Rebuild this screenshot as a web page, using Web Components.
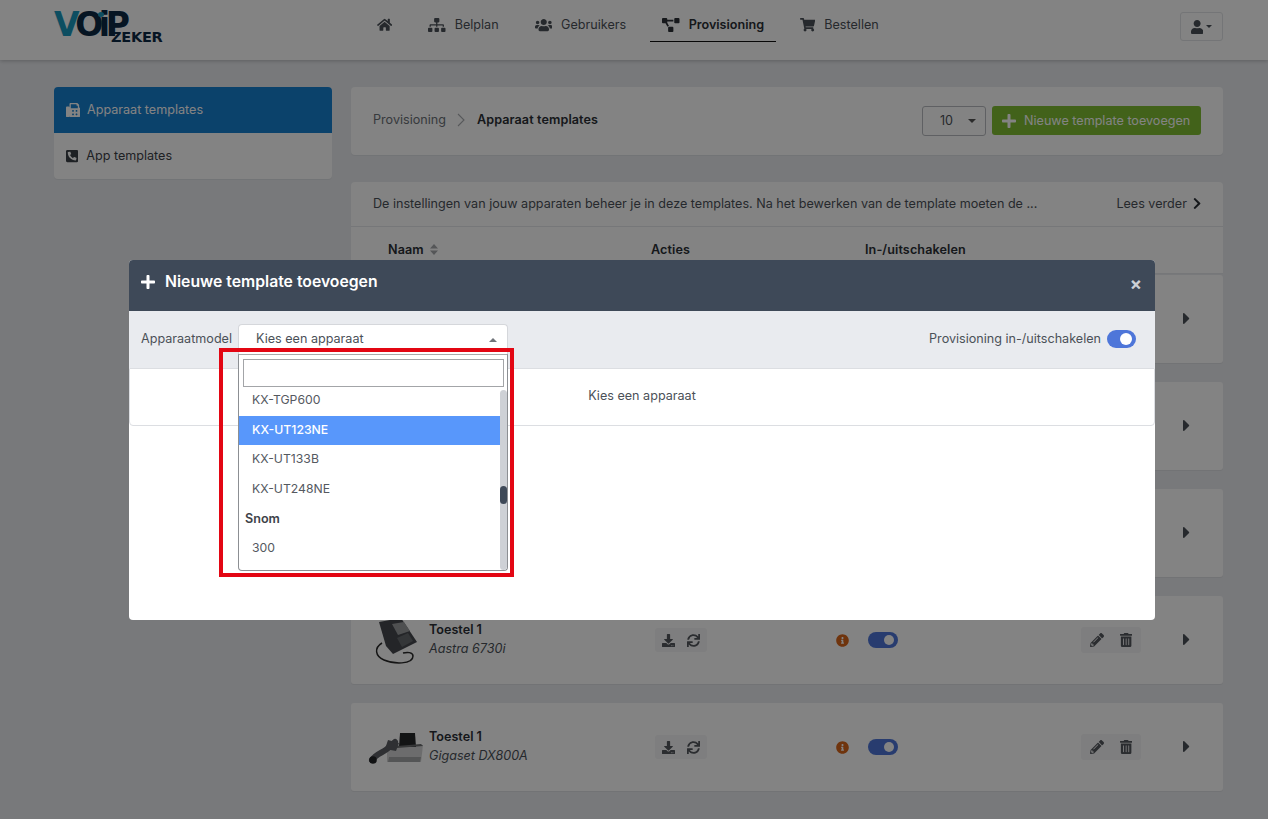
<!DOCTYPE html>
<html lang="nl"><head><meta charset="utf-8"><title>Provisioning</title>
<style>
html,body{margin:0;padding:0;height:100%;overflow:hidden}
body{background:#eaecf0;font:12.6px/1.4 Inter,"Liberation Sans",sans-serif;color:#4b5158}
</style></head><body>
<vz-app></vz-app>
<script>
const ICONS={
plus:[448,"M416 208H272V64c0-17.67-14.33-32-32-32h-32c-17.67 0-32 14.33-32 32v144H32c-17.67 0-32 14.33-32 32v32c0 17.67 14.33 32 32 32h144v144c0 17.67 14.33 32 32 32h32c17.67 0 32-14.33 32-32V304h144c17.67 0 32-14.33 32-32v-32c0-17.67-14.33-32-32-32z"],
caret:[192,"M0 384.662V127.338c0-17.818 21.543-26.741 34.142-14.142l128.662 128.662c7.81 7.81 7.81 20.474 0 28.284L34.142 398.804C21.543 411.404 0 402.48 0 384.662z"],
home:[576,"M280.37 148.26L96 300.11V464a16 16 0 0 0 16 16l112.06-.29a16 16 0 0 0 15.92-16V368a16 16 0 0 1 16-16h64a16 16 0 0 1 16 16v95.64a16 16 0 0 0 16 16.05L464 480a16 16 0 0 0 16-16V300L295.67 148.26a12.19 12.19 0 0 0-15.3 0zM571.6 251.47L488 182.56V44.05a12 12 0 0 0-12-12h-56a12 12 0 0 0-12 12v72.61L318.47 43a48 48 0 0 0-61 0L4.34 251.47a12 12 0 0 0-1.6 16.9l25.5 31A12 12 0 0 0 45.15 301l235.22-193.74a12.19 12.19 0 0 1 15.3 0L530.9 301a12 12 0 0 0 16.9-1.6l25.5-31a12 12 0 0 0-1.7-16.93z"],
user:[448,"M224 256c70.7 0 128-57.3 128-128S294.7 0 224 0 96 57.3 96 128s57.3 128 128 128zm89.6 32h-16.7c-22.2 10.2-46.9 16-72.9 16s-50.6-5.8-72.9-16h-16.7C60.2 288 0 348.2 0 422.4V464c0 26.5 21.5 48 48 48h352c26.5 0 48-21.5 48-48v-41.6c0-74.2-60.2-134.4-134.4-134.4z"],
cart:[576,"M528.12 301.319l47.273-208C578.806 78.301 567.391 64 551.99 64H159.208l-9.166-44.81C147.758 8.021 137.93 0 126.529 0H24C10.745 0 0 10.745 0 24v16c0 13.255 10.745 24 24 24h69.883l70.248 343.435C147.325 417.1 136 435.222 136 456c0 30.928 25.072 56 56 56s56-25.072 56-56c0-15.674-6.447-29.835-16.824-40h209.647C430.447 426.165 424 440.326 424 456c0 30.928 25.072 56 56 56s56-25.072 56-56c0-22.172-12.888-41.332-31.579-50.405l5.517-24.276c3.413-15.018-8.002-29.319-23.403-29.319H218.117l-6.545-32h293.145c11.206 0 20.92-7.754 23.403-18.681z"],
trash:[448,"M32 464a48 48 0 0 0 48 48h288a48 48 0 0 0 48-48V128H32zm272-256a16 16 0 0 1 32 0v224a16 16 0 0 1-32 0zm-96 0a16 16 0 0 1 32 0v224a16 16 0 0 1-32 0zm-96 0a16 16 0 0 1 32 0v224a16 16 0 0 1-32 0zM432 32H312l-9.4-18.7A24 24 0 0 0 281.1 0H166.8a23.72 23.72 0 0 0-21.4 13.3L136 32H16A16 16 0 0 0 0 48v32a16 16 0 0 0 16 16h416a16 16 0 0 0 16-16V48a16 16 0 0 0-16-16z"],
pencil:[512,"M497.9 142.1l-46.1 46.1c-4.7 4.7-12.3 4.7-17 0l-111-111c-4.7-4.7-4.7-12.3 0-17l46.1-46.1c18.7-18.7 49.1-18.7 67.9 0l60.1 60.1c18.8 18.7 18.8 49.1 0 67.9zM284.2 99.8L21.6 362.4.4 483.9c-2.9 16.4 11.4 30.6 27.8 27.8l121.5-21.3 262.6-262.6c4.7-4.7 4.7-12.3 0-17l-111-111c-4.8-4.7-12.4-4.7-17.1 0zM124.1 339.9c-5.5-5.5-5.5-14.3 0-19.8l154-154c5.5-5.5 14.3-5.5 19.8 0s5.5 14.3 0 19.8l-154 154c-5.5 5.5-14.3 5.5-19.8 0zM88 424h48v36.3l-64.5 11.3-31.1-31.1L51.7 376H88v48z"],
download:[512,"M216 0h80c13.3 0 24 10.7 24 24v168h87.7c17.8 0 26.7 21.5 14.1 34.1L269.7 378.3c-7.5 7.5-19.8 7.5-27.3 0L90.1 226.1c-12.6-12.6-3.7-34.1 14.1-34.1H192V24c0-13.3 10.7-24 24-24zm296 376v112c0 13.3-10.7 24-24 24H24c-13.3 0-24-10.7-24-24V376c0-13.3 10.7-24 24-24h146.7l49 49c20.1 20.1 52.5 20.1 72.6 0l49-49H488c13.3 0 24 10.7 24 24zm-124 88c0-11-9-20-20-20s-20 9-20 20 9 20 20 20 20-9 20-20zm64 0c0-11-9-20-20-20s-20 9-20 20 9 20 20 20 20-9 20-20z"],
sync:[512,"M440.65 12.57l4 82.77A247.16 247.16 0 0 0 255.83 8C134.73 8 33.91 94.92 12.29 209.82A12 12 0 0 0 24.09 224h49.05a12 12 0 0 0 11.67-9.26 175.91 175.91 0 0 1 317-56.94l-101.46-4.86a12 12 0 0 0-12.57 12v47.41a12 12 0 0 0 12 12H500a12 12 0 0 0 12-12V12a12 12 0 0 0-12-12h-47.37a12 12 0 0 0-11.98 12.57zM255.83 432a175.61 175.61 0 0 1-146-77.8l101.8 4.87a12 12 0 0 0 12.57-12v-47.4a12 12 0 0 0-12-12H12a12 12 0 0 0-12 12V500a12 12 0 0 0 12 12h47.35a12 12 0 0 0 12-12.6l-4.15-82.57A247.17 247.17 0 0 0 255.83 504c121.11 0 221.93-86.92 243.55-201.82a12 12 0 0 0-11.8-14.18h-49.05a12 12 0 0 0-11.67 9.26A175.86 175.86 0 0 1 255.83 432z"],
info:[512,"M256 8C119.043 8 8 119.083 8 256c0 136.997 111.043 248 248 248s248-111.003 248-248C504 119.083 392.957 8 256 8zm0 110c23.196 0 42 18.804 42 42s-18.804 42-42 42-42-18.804-42-42 18.804-42 42-42zm56 254c0 6.627-5.373 12-12 12h-88c-6.627 0-12-5.373-12-12v-24c0-6.627 5.373-12 12-12h12v-64h-12c-6.627 0-12-5.373-12-12v-24c0-6.627 5.373-12 12-12h64c6.627 0 12 5.373 12 12v100h12c6.627 0 12 5.373 12 12v24z"],
users:[640,"M96 224c35.3 0 64-28.7 64-64s-28.7-64-64-64-64 28.7-64 64 28.7 64 64 64zm448 0c35.3 0 64-28.7 64-64s-28.7-64-64-64-64 28.7-64 64 28.7 64 64 64zm32 32h-64c-17.6 0-33.5 7.1-45.1 18.6 40.3 22.1 68.9 62 75.1 109.4h66c17.7 0 32-14.3 32-32v-32c0-35.3-28.7-64-64-64zm-256 0c61.9 0 112-50.1 112-112S381.9 32 320 32 208 82.1 208 144s50.1 112 112 112zm76.8 32h-8.3c-20.8 10-43.9 16-68.5 16s-47.6-6-68.5-16h-8.3C179.6 288 128 339.6 128 403.2V432c0 26.5 21.5 48 48 48h288c26.5 0 48-21.5 48-48v-28.8c0-63.6-51.6-115.2-115.2-115.2zm-223.7-13.4C161.5 263.1 145.6 256 128 256H64c-35.3 0-64 28.7-64 64v32c0 17.7 14.3 32 32 32h65.9c6.3-47.4 34.9-87.3 75.2-109.4z"],
sitemap:[640,"M128 352H32c-17.67 0-32 14.33-32 32v96c0 17.67 14.33 32 32 32h96c17.67 0 32-14.33 32-32v-96c0-17.67-14.33-32-32-32zm-24-80h192v48h48v-48h192v48h48v-57.59c0-21.17-17.23-38.41-38.41-38.41H344v-64h40c17.67 0 32-14.33 32-32V32c0-17.67-14.33-32-32-32H256c-17.67 0-32 14.33-32 32v96c0 17.67 14.33 32 32 32h40v64H94.41C73.23 224 56 241.23 56 262.41V320h48v-48zm264 80h-96c-17.67 0-32 14.33-32 32v96c0 17.67 14.33 32 32 32h96c17.67 0 32-14.33 32-32v-96c0-17.67-14.33-32-32-32zm240 0h-96c-17.67 0-32 14.33-32 32v96c0 17.67 14.33 32 32 32h96c17.67 0 32-14.33 32-32v-96c0-17.67-14.33-32-32-32z"],
diagram:[640,"M384 320H256c-17.67 0-32 14.33-32 32v128c0 17.67 14.33 32 32 32h128c17.67 0 32-14.33 32-32V352c0-17.67-14.33-32-32-32zM192 32c0-17.67-14.33-32-32-32H32C14.33 0 0 14.33 0 32v128c0 17.67 14.33 32 32 32h95.72l73.16 128.04C211.98 300.98 232.4 288 256 288h.28L192 175.51V128h224V64H192V32zM608 0H480c-17.67 0-32 14.33-32 32v128c0 17.67 14.33 32 32 32h128c17.67 0 32-14.33 32-32V32c0-17.67-14.33-32-32-32z"],
phone:[448,"M400 32H48C21.49 32 0 53.49 0 80v352c0 26.51 21.49 48 48 48h352c26.51 0 48-21.49 48-48V80c0-26.51-21.49-48-48-48zm-16.39 307.37l-15 65A15 15 0 0 1 354 416C194 416 64 286.29 64 126a15.7 15.7 0 0 1 11.63-14.61l65-15A18.23 18.23 0 0 1 144 96a16.27 16.27 0 0 1 13.79 9.09l30 70A17.9 17.9 0 0 1 189 181a17 17 0 0 1-5.5 11.61l-37.89 31a231.91 231.91 0 0 0 110.78 110.78l31-37.89A17 17 0 0 1 299 291a17.85 17.85 0 0 1 5.91 1.21l70 30A16.25 16.25 0 0 1 384 336a17.41 17.41 0 0 1-.39 3.37z"],
fax:[512,"M480 160V77.25a32 32 0 0 0-9.38-22.63L425.37 9.37A32 32 0 0 0 402.75 0H160a32 32 0 0 0-32 32v448a32 32 0 0 0 32 32h320a32 32 0 0 0 32-32V192a32 32 0 0 0-32-32zM288 432a16 16 0 0 1-16 16h-32a16 16 0 0 1-16-16v-32a16 16 0 0 1 16-16h32a16 16 0 0 1 16 16zm0-128a16 16 0 0 1-16 16h-32a16 16 0 0 1-16-16v-32a16 16 0 0 1 16-16h32a16 16 0 0 1 16 16zm128 128a16 16 0 0 1-16 16h-32a16 16 0 0 1-16-16v-32a16 16 0 0 1 16-16h32a16 16 0 0 1 16 16zm0-128a16 16 0 0 1-16 16h-32a16 16 0 0 1-16-16v-32a16 16 0 0 1 16-16h32a16 16 0 0 1 16 16zm16-112H176V48h208v32a16 16 0 0 0 16 16h32zM96 128H32a32 32 0 0 0-32 32v320a32 32 0 0 0 32 32h64a32 32 0 0 0 32-32V160a32 32 0 0 0-32-32z"],
chev:[320,"M285.476 272.971L91.132 467.314c-9.373 9.373-24.569 9.373-33.941 0l-22.667-22.667c-9.357-9.357-9.375-24.522-.04-33.901L188.505 256 34.484 101.255c-9.335-9.379-9.317-24.544.04-33.901l22.667-22.667c9.373-9.373 24.569-9.373 33.941 0L285.475 239.03c9.373 9.372 9.373 24.568.001 33.941z"]
};
function el(name,html){customElements.define(name,class extends HTMLElement{constructor(){super();this.attachShadow({mode:"open"}).innerHTML=typeof html==="function"?html(this):html}})}
customElements.define("vz-icon",class extends HTMLElement{
  constructor(){super();this.attachShadow({mode:"open"})}
  connectedCallback(){const [w,d]=ICONS[this.getAttribute("name")];const h=this.getAttribute("size")||13;
    this.shadowRoot.innerHTML=`<style>:host{display:inline-flex;flex:none}svg{display:block;height:${h}px;width:${h*w/512}px;fill:currentColor}</style><svg viewBox="0 0 ${w} 512" aria-hidden="true"><path d="${d}"/></svg>`}
});
customElements.define("vz-toggle",class extends HTMLElement{
  constructor(){super();this.attachShadow({mode:"open"}).innerHTML=`<style>:host{display:flex;align-items:center;justify-content:flex-end;box-sizing:border-box;width:var(--w,30px);height:var(--h,16px);padding-right:4px;border-radius:9px;background:#4e76d9;flex:none}i{display:block;width:var(--k,10px);height:var(--k,10px);border-radius:50%;background:#fff}</style><i></i>`}
});
customElements.define("nav-link",class extends HTMLElement{
  constructor(){super();this.attachShadow({mode:"open"})}
  connectedCallback(){const a=this.hasAttribute("active");
    this.shadowRoot.innerHTML=`<style>:host{display:flex;align-items:center;gap:9px;height:34px;box-sizing:border-box;padding:1px 12px 0;color:${a?"#2b3036":"#4b5158"};font-weight:${a?600:400};border-bottom:1px solid ${a?"#111":"transparent"}}</style><vz-icon name="${this.getAttribute("icon")}" size="${this.getAttribute("size")||14}"></vz-icon><slot></slot>`}
});
el("vz-logo",`<style>:host{display:block;width:110px;height:32px;position:relative;font-family:"DejaVu Sans",sans-serif;font-weight:700;line-height:1;white-space:nowrap}
.a{position:absolute;left:0;top:-4px;font-size:33px;letter-spacing:-4.4px;color:#0c2a45}
.a b{color:#1b98bd}
.d{position:absolute;left:44px;top:0;width:6px;height:5px;border-radius:50%;background:#1b98bd}
.z{position:absolute;left:57px;top:18px;font-size:14.5px;letter-spacing:-.25px;color:#0c2a45}</style>
<div class="a"><b>V</b>OiP</div><div class="d"></div><div class="z">ZEKER</div>`);
el("vz-header",`<style>:host{display:flex;align-items:flex-start;height:60px;box-sizing:border-box;background:#fff;padding:0 45px 0 54px;box-shadow:0 1px 4px rgba(0,0,0,.22);position:relative}
vz-logo{margin-top:12px}nav{display:flex;gap:12px;margin-left:201px;margin-top:8px}
.u{margin-left:auto;margin-top:12px;width:43px;height:29px;box-sizing:border-box;border:1px solid #e2e4e7;border-radius:3px;display:flex;align-items:center;justify-content:center;gap:3px;color:#4b5158}
.u i{border:3.5px solid transparent;border-top-color:currentColor;border-bottom:0;display:block}</style>
<vz-logo></vz-logo>
<nav><nav-link icon="home" size="13.5"></nav-link><nav-link icon="sitemap">Belplan</nav-link><nav-link icon="users">Gebruikers</nav-link><nav-link icon="diagram" active>Provisioning</nav-link><nav-link icon="cart" size="13.5">Bestellen</nav-link></nav>
<div class="u"><vz-icon name="user" size="14"></vz-icon><i></i></div>`);
el("vz-sidebar",`<style>:host{display:block;background:#fff;border-radius:4px;overflow:hidden;align-self:start;box-shadow:0 1px 1px rgba(0,0,0,.05)}
div{display:flex;align-items:center;height:46px;padding:0 12px 1px;gap:8px;color:#3c4147;box-sizing:border-box}
.on{background:#1780d0;color:#fff;gap:7px}</style>
<div class="on"><vz-icon name="fax" size="14"></vz-icon>Apparaat templates</div><div><vz-icon name="phone" size="14"></vz-icon>App templates</div>`);
el("vz-toolbar",`<style>:host{display:flex;align-items:flex-start;height:68px;box-sizing:border-box;background:#fff;border-radius:4px;padding:19px 22px 0;box-shadow:0 1px 1px rgba(0,0,0,.05)}
.c{display:flex;align-items:center;height:27px;color:#6c7177}.c svg{margin:0 11.5px;display:block}.c b{color:#2b3036;font-weight:600;letter-spacing:.1px}
.s{margin-left:auto;margin-right:6px;box-sizing:border-box;width:64px;height:30px;border:1px solid #b9bcc0;border-radius:3px;display:flex;align-items:center;padding-left:17px;color:#4b5158}
.s i{margin-left:15px;border:4px solid transparent;border-top-color:#555;border-bottom:0}
.b{box-sizing:border-box;height:29px;width:209px;border-radius:3px;background:#80bf33;color:#fff;display:flex;align-items:center;padding-left:10px;gap:8px}</style>
<div class="c">Provisioning<svg width="8" height="14" viewBox="0 0 8 14" fill="none" stroke="#a9acb0" stroke-width="1.1"><path d="M1 1l6 6-6 6"/></svg><b>Apparaat templates</b></div>
<div class="s">10<i></i></div><div class="b"><vz-icon name="plus" size="16"></vz-icon>Nieuwe template toevoegen</div>`);
el("vz-table-head",`<style>:host{display:block;background:#fff;border-radius:4px 4px 0 0;height:92px;box-sizing:border-box;border-bottom:1px solid #e6e8eb}
.t{display:flex;align-items:center;justify-content:space-between;height:45px;box-sizing:border-box;padding:0 22px 1px;border-bottom:1px solid #e6e8eb;color:#4b5158}
.t span:last-child{display:flex;align-items:center;gap:6px}
.h{display:grid;grid-template-columns:263px 214px 1fr;padding-left:37px;height:45px;align-items:center;font-weight:600;color:#2b3036;letter-spacing:.1px}
.h span{display:flex;align-items:center;gap:6px}</style>
<div class="t"><span>De instellingen van jouw apparaten beheer je in deze templates. Na het bewerken van de template moeten de ...</span><span>Lees verder <vz-icon name="chev" size="13" style="color:#2b3036"></vz-icon></span></div>
<div class="h"><span>Naam <svg width="8" height="11" viewBox="0 0 8 11" fill="#a5a8ac"><path d="M4 0l4 4.5H0zM4 11L0 6.5h8z"/></svg></span><span>Acties</span><span>In-/uitschakelen</span></div>`);
const PHONES={
aastra:`<svg width="78" height="88" viewBox="0 0 78 88"><path d="M31 47C23 52 24 60 33 64c9 4 29 5 29-4 0-4-6-4-10-3" fill="none" stroke="#2a2a2a" stroke-width="1.5"/><path d="M28 26L50 22 66 46 42 58 35 50z" fill="#46494e"/><path d="M41 28l12-2 6 9-12 4z" fill="#9a9c9f"/><path d="M46 42l11-5 5 8-11 6z" fill="#66696d"/></svg>`,
gigaset:`<svg width="78" height="88" viewBox="0 0 78 88"><path d="M36 42h36l-2 17H36z" fill="#d2d3d4"/><path d="M38 54h32l-1 5H37z" fill="#a4a6a8"/><path d="M49 30h15l1 14H48z" fill="#26272a"/><path d="M46 43l24-2 2 2-26 2z" fill="#6b6d70"/><path d="M21 57c4-6 10-7 15-11l8-7" fill="none" stroke="#5c5f64" stroke-width="6" stroke-linecap="round"/><circle cx="22" cy="57" r="3.8" fill="#222326"/><path d="M37 37l11 3-3 8-11-2z" fill="#5c5f64"/></svg>`};
customElements.define("vz-row",class extends HTMLElement{
  constructor(){super();this.attachShadow({mode:"open"})}
  connectedCallback(){const n=this.getAttribute("model");const p=this.getAttribute("phone");
    const tool=(a,b,w)=>`<div class="g" style="width:${w}px"><vz-icon name="${a}" size="${a=="pencil"?14:13}"></vz-icon><vz-icon name="${b}" size="${a=="pencil"?14:13}"></vz-icon></div>`;
    this.shadowRoot.innerHTML=`<style>:host{display:grid;grid-template-columns:78px 226px 181px 245px 102px 1fr;align-items:center;height:88px;background:#fff;border-radius:3px;box-shadow:0 1px 1px rgba(0,0,0,.06);color:#4b5158}
.p{height:88px}.p svg{display:block}
.n{margin-top:-2px}.n b{display:block;font-weight:600;color:#2b3036;line-height:19px}.n em{display:block;line-height:19px;color:#4b5158}
.g{display:flex;align-items:center;justify-content:space-around;height:24px;background:#f6f6f7;border-radius:3px;box-sizing:border-box;padding:0 1px;color:#54585e}
.e{height:26px}.i{display:flex;align-items:center;gap:19px}.i vz-icon{color:#d9651a}
.c{color:#4b5158;display:block;margin-top:-1px}</style>
${n?`<div class="p">${PHONES[p]}</div><div class="n"><b>Toestel 1</b><em>${n}</em></div>
<div>${tool("download","sync",52)}</div><div class="i"><vz-icon name="info" size="13"></vz-icon><vz-toggle></vz-toggle></div>
<div class="e">${tool("pencil","trash",60).replace('class="g"','class="g e"')}</div>`:`<div></div><div></div><div></div><div></div><div></div>`}
<vz-icon class="c" name="caret" size="19"></vz-icon>`}
});
el("vz-dropdown",`<style>:host{position:absolute;left:0;top:30px;width:270px;height:217px;box-sizing:border-box;background:#fff;border:1px solid #8c8f93;border-top-color:#aaa;border-radius:0 0 4px 4px;display:block;z-index:2;font-size:12.25px}
.s{box-sizing:border-box;position:absolute;left:4px;top:4px;width:261px;height:28px;border:1px solid #a3a5a8;background:#fff}
.l{position:absolute;left:0;top:35px;right:0;bottom:0;overflow:hidden;border-radius:0 0 3px 3px}
.in{margin-top:-3.6px;margin-right:7px}
.o{height:29.7px;line-height:28.9px;padding-left:13px;color:#55595f}
.o.on{background:#5897fb;color:#fff;font-weight:500}
.g{height:29.7px;line-height:28.4px;padding-left:6px;font-weight:600;color:#3e4248;font-size:12.6px}
.o.last{margin-bottom:6px}
.t{position:absolute;right:0;top:35px;bottom:0;width:7px;background:#ced1d6;border-radius:4px}
.th{position:absolute;right:0;top:131px;width:7px;height:18px;background:#3e4958;border-radius:4px}</style>
<input class="s" aria-label="Zoeken">
<div class="l"><div class="in"><div class="o">KX-TGP600</div><div class="o on">KX-UT123NE</div><div class="o">KX-UT133B</div><div class="o">KX-UT248NE</div><div class="g">Snom</div><div class="o last">300</div></div></div>
<div class="t"></div><div class="th"></div>`);
el("vz-select",`<style>:host{position:relative;display:block;width:270px;height:31px;box-sizing:border-box;background:#fff;border:1px solid #d5d7db;border-radius:4px 4px 0 0;border-bottom:0}
.v{position:absolute;left:17px;top:5px;color:#4b5158}
.a{position:absolute;right:10px;top:13px;border:4px solid transparent;border-bottom-color:#70747a;border-top:0}
.r{position:absolute;left:-20px;top:23px;width:295px;height:229px;box-sizing:border-box;border:4px solid #e30613;z-index:3;pointer-events:none}
vz-dropdown{margin:-1px 0 0 -1px}</style>
<span class="v">Kies een apparaat</span><i class="a"></i><vz-dropdown></vz-dropdown><div class="r"></div>`);
el("vz-modal",`<style>:host{position:absolute;left:129px;top:260px;width:1026px;height:360px;background:#fff;border-radius:4px;display:block;color:#4b5158}
header{display:flex;align-items:center;height:51px;box-sizing:border-box;padding:0 13px 7px 12px;background:#3e4958;color:#fff;border-radius:4px 4px 0 0;gap:10px;font-size:15.75px;font-weight:600}
header .x{margin-left:auto;color:#ccd0d5;font-size:18px;font-weight:700;line-height:1;margin-top:4px}
.b{display:flex;align-items:center;height:57px;box-sizing:border-box;background:#e9ebef;padding:0 19px 2px 12px}
.b>span{margin-right:6px}
vz-select{margin-top:1px}
.r{margin-left:auto;display:flex;align-items:center;gap:6px;--w:29px;--h:18px;--k:12px}
.p{height:58px;box-sizing:border-box;border:1px solid #dcdee2;border-radius:0 0 4px 4px;display:flex;align-items:center;justify-content:center;padding-bottom:3px}</style>
<header><vz-icon name="plus" size="16"></vz-icon>Nieuwe template toevoegen<span class="x">×</span></header>
<div class="b"><span>Apparaatmodel</span><vz-select></vz-select><div class="r">Provisioning in-/uitschakelen<vz-toggle></vz-toggle></div></div>
<div class="p">Kies een apparaat</div>`);
el("vz-overlay",`<style>:host{position:fixed;inset:0;background:rgba(0,0,0,.485);display:block;z-index:10}</style><slot></slot>`);
el("vz-app",`<style>:host{display:block}
main{display:grid;grid-template-columns:278px 872px;gap:19px;padding:27px 45px 0 54px}
section{display:flex;flex-direction:column}
vz-table-head{margin-top:27px;margin-bottom:1px}
.rows{display:flex;flex-direction:column;gap:19px}</style>
<vz-header></vz-header>
<main><vz-sidebar></vz-sidebar><section><vz-toolbar></vz-toolbar><vz-table-head></vz-table-head>
<div class="rows"><vz-row></vz-row><vz-row></vz-row><vz-row></vz-row><vz-row phone="aastra" model="Aastra 6730i"></vz-row><vz-row phone="gigaset" model="Gigaset DX800A"></vz-row></div></section></main>
<vz-overlay><vz-modal></vz-modal></vz-overlay>`);
</script>
</body></html>
